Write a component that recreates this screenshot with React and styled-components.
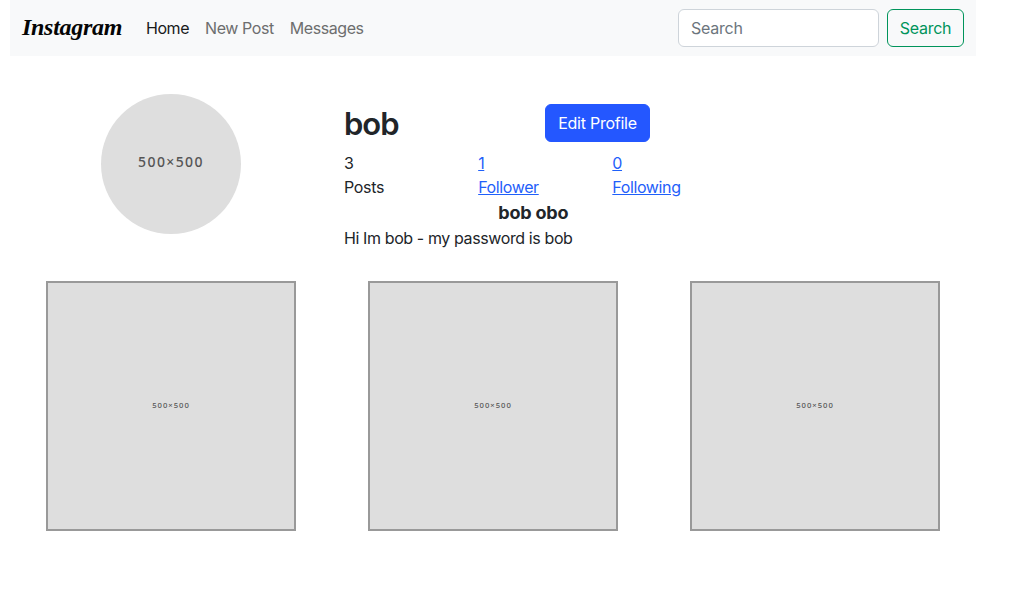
import React from "react";
import styled, { createGlobalStyle } from "styled-components";

const GlobalStyle = createGlobalStyle`
  *, *::before, *::after { box-sizing: border-box; }
  body {
    margin: 0;
    background: #fff;
    color: #212529;
    font: 400 16px/24px Inter, "Liberation Sans", sans-serif;
    letter-spacing: -0.32px;
  }
  h1, h2, p { margin: 0; }
`;

const Container = styled.div`
  width: 966px;
  margin-left: 10px;
`;

const Navbar = styled.nav`
  height: 56px;
  padding: 0 12px;
  display: flex;
  align-items: center;
  background: #f8f9fa;
`;

const Brand = styled.a`
  width: 100px;
  height: 36px;
  margin-right: 16px;
  color: #050505;
  font: italic 700 24px/34px "Liberation Serif", serif;
  letter-spacing: -0.3px;
  white-space: nowrap;
`;

const NavLink = styled.a`
  padding: 8px;
  letter-spacing: -0.43px;
  color: ${(p) => (p.$active ? "#191a1a" : "#6d6e6e")};
`;

const SearchForm = styled.form`
  display: flex;
  gap: 8px;
  margin-left: auto;
`;

const SearchInput = styled.input`
  width: 201px;
  height: 38px;
  padding: 6px 12px;
  border: 1px solid #ced4da;
  border-radius: 6px;
  background: #fff;
  font: inherit;
  letter-spacing: -0.25px;
  &::placeholder { color: #6c757d; opacity: 1; }
`;

const Button = styled.button`
  width: ${(p) => p.$width};
  height: 38px;
  padding: 0;
  border: 1px solid ${(p) => (p.$primary ? "#2457ff" : "#00945b")};
  border-radius: 6px;
  background: ${(p) => (p.$primary ? "#2457ff" : "transparent")};
  color: ${(p) => (p.$primary ? "#fff" : "#00945b")};
  font: inherit;
  letter-spacing: -0.25px;
  white-space: nowrap;
`;

const Profile = styled.section`
  display: grid;
  grid-template-columns: 322px 402.5px;
  margin-top: 37.5px;
  height: 187.5px;
`;

const Avatar = styled.div`
  width: 140px;
  height: 140px;
  margin: 0 auto;
  border-radius: 50%;
  background: #dedede;
  display: flex;
  align-items: center;
  justify-content: center;
  padding-bottom: 4px;
  color: #555;
  font: 500 14px/20px "Noto Sans", sans-serif;
  letter-spacing: 1.4px;
`;

const Details = styled.div`
  padding: 10.5px 12px 0;
`;

const Heading = styled.div`
  display: grid;
  grid-template-columns: 201px 1fr;
  height: 47px;
`;

const Username = styled.h1`
  padding-top: 1px;
  font-size: 31px;
  font-weight: 600;
  line-height: 38px;
  letter-spacing: -1px;
`;

const Stats = styled.div`
  display: grid;
  grid-template-columns: repeat(3, 134.17px);
`;

const Stat = styled.div`
  display: flex;
  flex-direction: column;
  align-items: flex-start;
  letter-spacing: ${(p) => (p.$link ? "-0.38px" : "-0.32px")};
  color: ${(p) => (p.$link ? "#1f60fa" : "inherit")};
  text-decoration: ${(p) => (p.$link ? "underline" : "none")};
`;

const FullName = styled.h2`
  padding-top: 2px;
  font-size: 18px;
  font-weight: 700;
  line-height: 24px;
  text-align: center;
  letter-spacing: -0.2px;
`;

const Bio = styled.p`
  padding-top: 1px;
  letter-spacing: -0.39px;
`;

const Posts = styled.main`
  display: grid;
  grid-template-columns: repeat(3, 322px);
  justify-items: center;
`;

const Post = styled.div`
  width: 250px;
  height: 250px;
  border: 2px solid #999;
  background: #dedede;
  display: flex;
  align-items: center;
  justify-content: center;
  padding-bottom: 2px;
  color: #555;
  font: 500 7.7px/10px "Noto Sans", sans-serif;
  letter-spacing: 0.98px;
`;

export default function App() {
  return (
    <>
      <GlobalStyle />
      <Container>
        <Navbar>
          <Brand>Instagram</Brand>
          <NavLink $active>Home</NavLink>
          <NavLink>New Post</NavLink>
          <NavLink>Messages</NavLink>
          <SearchForm>
            <SearchInput placeholder="Search" />
            <Button type="button" $width="77px">Search</Button>
          </SearchForm>
        </Navbar>
        <Profile>
          <Avatar>500×500</Avatar>
          <Details>
            <Heading>
              <Username>bob</Username>
              <Button type="button" $primary $width="105px">Edit Profile</Button>
            </Heading>
            <Stats>
              <Stat><span>3</span><span>Posts</span></Stat>
              <Stat $link><span>1</span><span>Follower</span></Stat>
              <Stat $link><span>0</span><span>Following</span></Stat>
            </Stats>
            <FullName>bob obo</FullName>
            <Bio>Hi Im bob - my password is bob</Bio>
          </Details>
        </Profile>
        <Posts>
          <Post>500×500</Post>
          <Post>500×500</Post>
          <Post>500×500</Post>
        </Posts>
      </Container>
    </>
  );
}
